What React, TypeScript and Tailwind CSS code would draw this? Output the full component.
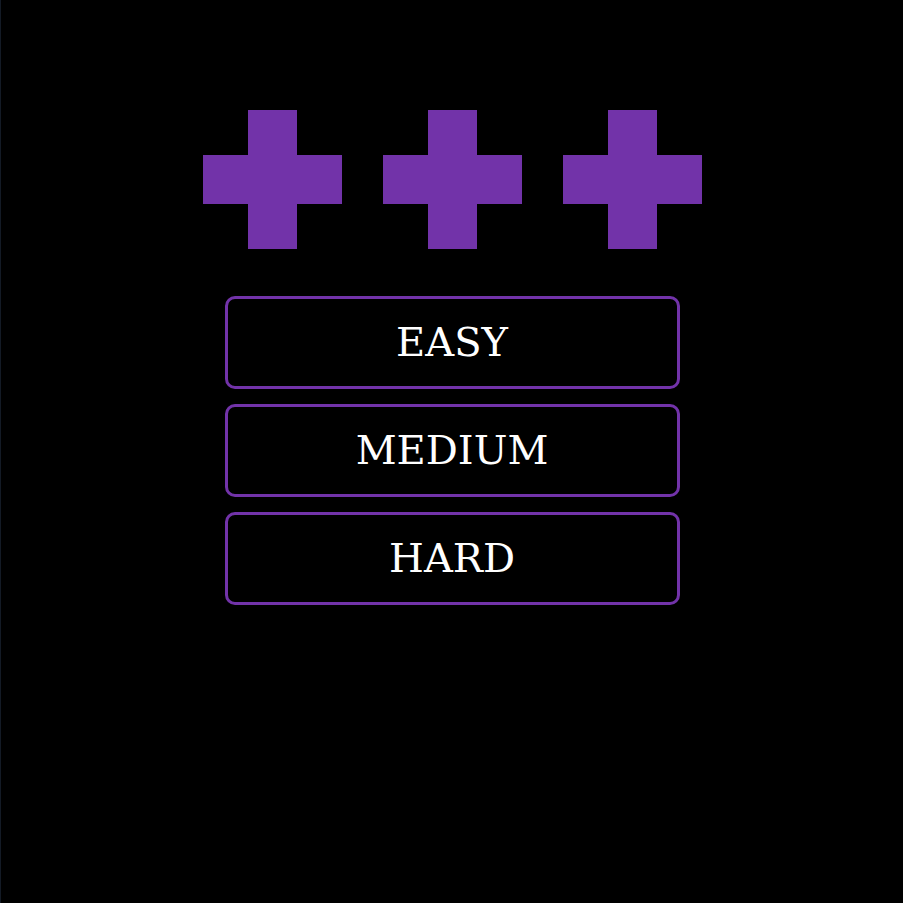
const levels = ['EASY', 'MEDIUM', 'HARD'];

const Cross = () => (
  <svg width="139" height="139" viewBox="0 0 139 139" className="block">
    <path d="M45 0H94V45H139V94H94V139H45V94H0V45H45Z" fill="#7233a9" />
  </svg>
);

const App = () => {
  return (
    <main className="min-h-screen w-full bg-black border-l border-[#131a25] flex flex-col items-center pt-[110px]">
      <div className="flex gap-[41px]">
        <Cross />
        <Cross />
        <Cross />
      </div>

      <div className="mt-[47px] flex flex-col gap-[15px]">
        {levels.map((level) => (
          <button
            key={level}
            className="w-[455px] h-[93px] border-[3px] border-[#7233a9] rounded-[10px] bg-black text-white text-[40px] leading-none flex items-center justify-center pb-[2px]"
            style={{ fontFamily: '"DejaVu Serif", "Liberation Serif", serif' }}
          >
            {level}
          </button>
        ))}
      </div>
    </main>
  );
};

export default App;
